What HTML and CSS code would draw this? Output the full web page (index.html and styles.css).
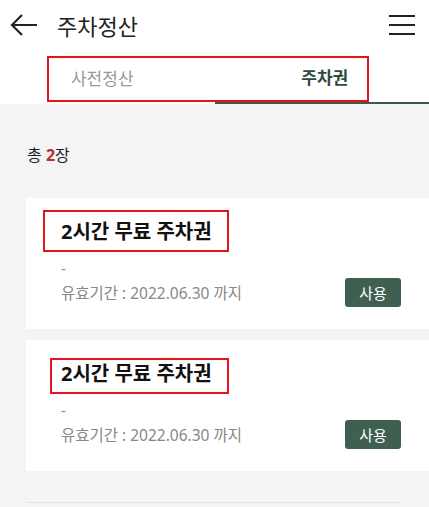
FILE: index.html
```html
<!DOCTYPE html>
<html lang="ko">
<head>
  <meta charset="UTF-8">
  <meta name="viewport" content="width=device-width, initial-scale=1.0">
  <title>주차정산</title>
  <link rel="stylesheet" href="styles.css">
</head>
<body>

<div class="header">
  <svg class="back" width="28" height="22" viewBox="0 0 28 22">
    <path d="M2 11 H27 M12 1 L2 11 L12 21" fill="none" stroke="#222" stroke-width="2.2"/>
  </svg>
  <h1 class="title">주차정산</h1>
  <svg class="menu" width="28" height="22" viewBox="0 0 28 22">
    <path d="M1 2 H27 M1 11 H27 M1 20 H27" stroke="#222" stroke-width="2.2"/>
  </svg>
</div>

<div class="tabs">
  <div class="tab">사전정산</div>
  <div class="tab active">주차권</div>
  <div class="mark mark-tabs"></div>
</div>

<div class="content">
  <p class="count">총 <b>2</b>장</p>

  <div class="card">
    <div class="mark mark-title1"></div>
    <h2 class="card-title">2시간 무료 주차권</h2>
    <div class="card-desc">-</div>
    <div class="card-row">
      <span class="period">유효기간 : 2022.06.30 까지</span>
      <button class="use">사용</button>
    </div>
  </div>

  <div class="card">
    <div class="mark mark-title2"></div>
    <h2 class="card-title">2시간 무료 주차권</h2>
    <div class="card-desc">-</div>
    <div class="card-row">
      <span class="period">유효기간 : 2022.06.30 까지</span>
      <button class="use">사용</button>
    </div>
  </div>

  <div class="divider"></div>
</div>

</body>
</html>
```

FILE: styles.css
```css
body {
  margin: 0;
  font-family: "Noto Sans", "Noto Sans CJK KR", sans-serif;
  background-color: #fff;
  color: #222;
  overflow: hidden;
}
.header {
  height: 50px;
  display: flex;
  align-items: center;
  padding: 0 13px 0 10px;
}
.title {
  margin: 0 0 0 19px;
  font-size: 22px;
  font-weight: 400;
  flex: 1;
}
.tabs {
  position: relative;
  display: flex;
  height: 54px;
}
.tab {
  width: 50%;
  box-sizing: border-box;
  display: flex;
  align-items: center;
  justify-content: center;
  padding-right: 10px;
  font-size: 17px;
  color: #999;
}
.tab.active {
  padding: 0 0 0 6px;
  color: #2f4a3d;
  font-weight: 700;
  border-bottom: 2px solid #3d5a4c;
}
.mark {
  position: absolute;
  border: 2px solid #e5141b;
}
.mark-tabs {
  left: 47px;
  top: 6px;
  width: 318px;
  height: 42px;
}
.content {
  background-color: #f4f4f4;
  padding: 1px 0 0 26px;
  height: 420px;
}
.count {
  margin: 37px 0 32px 1px;
  font-size: 16px;
}
.count b {
  color: #c0282d;
}
.card {
  position: relative;
  background-color: #fff;
  padding: 18px 28px 22px 35px;
  margin-bottom: 11px;
}
.card-title {
  margin: 0;
  font-size: 20px;
  font-weight: 700;
  color: #111;
}
.card-desc {
  margin-top: 13px;
  font-size: 15px;
  color: #888;
  line-height: 20px;
}
.card-row {
  display: flex;
  align-items: center;
  justify-content: space-between;
}
.period {
  font-size: 15.5px;
  color: #888;
}
.use {
  width: 56px;
  height: 29px;
  border: none;
  border-radius: 3px;
  background-color: #3f6050;
  color: #fff;
  font-family: inherit;
  font-size: 15px;
}
.mark-title1 {
  left: 17px;
  top: 12px;
  width: 182px;
  height: 38px;
}
.mark-title2 {
  left: 24px;
  top: 18px;
  width: 175px;
  height: 32px;
}
.divider {
  margin-top: 31px;
  width: 374px;
  border-top: 1px solid #e2e2e2;
}
```
